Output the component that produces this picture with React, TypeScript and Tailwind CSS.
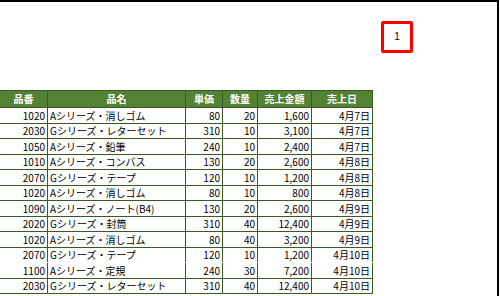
import React from "react";

// Sales rows shown in the sheet
interface SaleRow {
  code: string;
  name: string;
  price: string;
  qty: string;
  amount: string;
  date: string;
}

const rows: SaleRow[] = [
  { code: "1020", name: "Aシリーズ・消しゴム", price: "80", qty: "20", amount: "1,600", date: "4月7日" },
  { code: "2030", name: "Gシリーズ・レターセット", price: "310", qty: "10", amount: "3,100", date: "4月7日" },
  { code: "1050", name: "Aシリーズ・鉛筆", price: "240", qty: "10", amount: "2,400", date: "4月7日" },
  { code: "1010", name: "Aシリーズ・コンパス", price: "130", qty: "20", amount: "2,600", date: "4月8日" },
  { code: "2070", name: "Gシリーズ・テープ", price: "120", qty: "10", amount: "1,200", date: "4月8日" },
  { code: "1020", name: "Aシリーズ・消しゴム", price: "80", qty: "10", amount: "800", date: "4月8日" },
  { code: "1090", name: "Aシリーズ・ノート(B4)", price: "130", qty: "20", amount: "2,600", date: "4月9日" },
  { code: "2020", name: "Gシリーズ・封筒", price: "310", qty: "40", amount: "12,400", date: "4月9日" },
  { code: "1020", name: "Aシリーズ・消しゴム", price: "80", qty: "40", amount: "3,200", date: "4月9日" },
  { code: "2070", name: "Gシリーズ・テープ", price: "120", qty: "10", amount: "1,200", date: "4月10日" },
  { code: "1100", name: "Aシリーズ・定規", price: "240", qty: "30", amount: "7,200", date: "4月10日" },
  { code: "2030", name: "Gシリーズ・レターセット", price: "310", qty: "40", amount: "12,400", date: "4月10日" },
];

const headers = ["品番", "品名", "単価", "数量", "売上金額", "売上日"];

const App: React.FC = () => {
  return (
    <div className="w-[500px] h-[296px] overflow-hidden bg-white font-['Noto_Sans_CJK_JP',sans-serif]">
      <div className="w-[499px] h-[296px] border-t-2 border-r-2 border-black">
        {/* page number box */}
        <div className="flex pt-[19px] pl-[381px]">
          <div className="w-[32px] h-[32px] border-[3px] border-[#ff0000] rounded-[2px] flex items-center justify-center text-[10px] leading-none text-black font-['Liberation_Sans',sans-serif]">
            1
          </div>
        </div>

        {/* sales table */}
        <div className="mt-[37px] w-[373px] border-t border-[#3a5a24] text-[10px] leading-none">
          <div className="grid grid-cols-[48px_138px_37px_35px_54px_61px] h-[17px] bg-[#548235] text-white font-bold">
            {headers.map((h) => (
              <div
                key={h}
                className="flex items-center justify-center border-r border-b border-[#3a5a24]"
              >
                {h}
              </div>
            ))}
          </div>
          {rows.map((r, i) => (
            <div
              key={i}
              className={
                "grid grid-cols-[48px_138px_37px_35px_54px_61px] text-black " +
                (i % 2 === 0 ? "h-[16px] " : "h-[15px] ") +
                (i === 9 ? "border-b border-white" : "border-b border-[#3a5a24]")
              }
            >
              <div className="flex items-center justify-end pr-[2px] border-r border-[#3a5a24]">{r.code}</div>
              <div className="flex items-center pl-[2px] border-r border-[#3a5a24] whitespace-nowrap">{r.name}</div>
              <div className="flex items-center justify-end pr-[2px] border-r border-[#3a5a24]">{r.price}</div>
              <div className="flex items-center justify-end pr-[2px] border-r border-[#3a5a24]">{r.qty}</div>
              <div className="flex items-center justify-end pr-[2px] border-r border-[#3a5a24]">{r.amount}</div>
              <div className="flex items-center justify-end pr-[2px] border-r border-[#3a5a24]">{r.date}</div>
            </div>
          ))}
        </div>
      </div>
    </div>
  );
};

export default App;
